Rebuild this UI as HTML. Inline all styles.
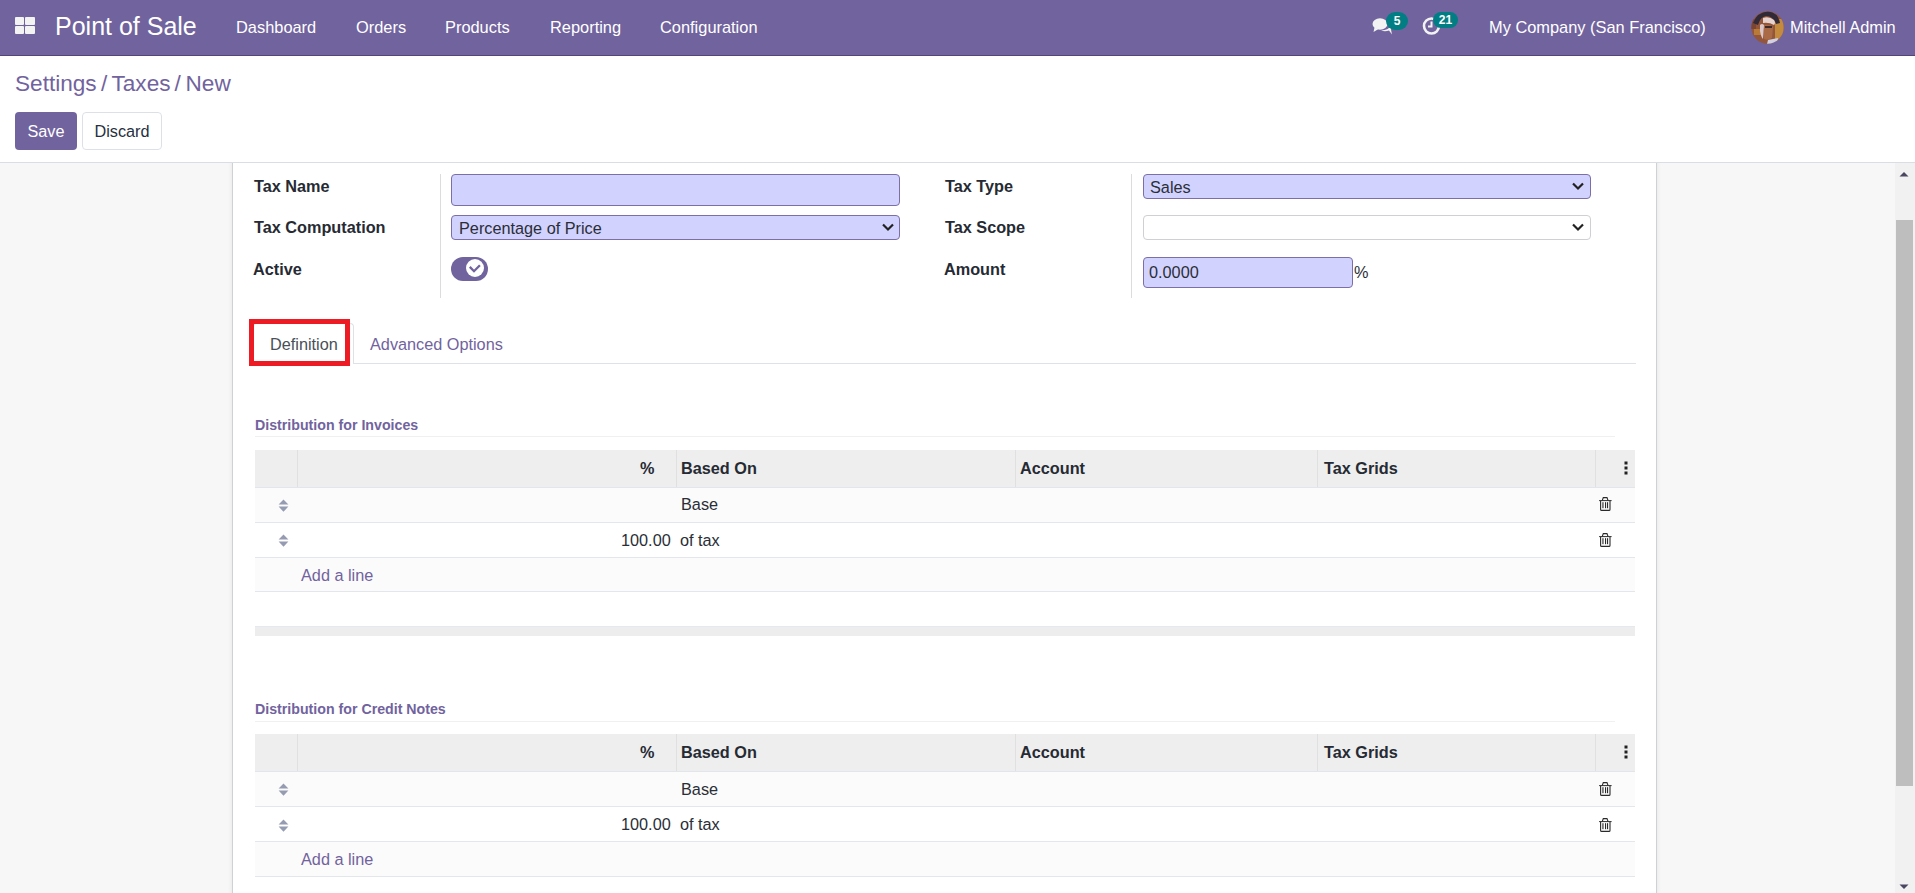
<!DOCTYPE html>
<html><head><meta charset="utf-8">
<style>
*{box-sizing:border-box;margin:0;padding:0}
html,body{width:1915px;height:893px;overflow:hidden;background:#fff;font-family:"Liberation Sans",sans-serif;font-size:16.25px;color:#2a2e36}
.a{position:absolute;white-space:nowrap}
.t{position:absolute;white-space:nowrap;line-height:20px}
#nav{position:absolute;left:0;top:0;width:1915px;height:56px;background:#71639e;border-bottom:1px solid #514579}
.nv{position:absolute;top:17px;line-height:20px;color:#fff;font-size:16.4px;white-space:nowrap}
#content{position:absolute;left:0;top:163px;width:1915px;height:730px;background:#f7f7f7;overflow:hidden}
.lbl{position:absolute;font-weight:700;color:#262a33;white-space:nowrap;line-height:20px}
.req{position:absolute;background:#d2d2ff;border:1px solid #7b6fa6;border-radius:4px}
.hd{position:absolute;background:#eeeeee;border-bottom:1px solid #e2e5ea}
.vl{position:absolute;width:1px;background:#dcdcdc}
.hl{position:absolute;height:1px;background:#e3e6ea}
.row1{position:absolute;background:#fbfbfb}
.th{position:absolute;font-weight:700;color:#262a33;white-space:nowrap;line-height:20px}
.dist{position:absolute;font-weight:700;font-size:14.2px;color:#71639e;white-space:nowrap;line-height:18px}
</style></head><body>
<!-- NAVBAR -->
<div id="nav">
  <div class="a" style="left:15px;top:17px;width:20px;height:17px">
    <div style="position:absolute;left:0;top:0;width:9px;height:8px;background:#f3f3f3;border-radius:1px"></div>
    <div style="position:absolute;left:10px;top:0;width:10px;height:8px;background:#f3f3f3;border-radius:1px"></div>
    <div style="position:absolute;left:0;top:9px;width:9px;height:8px;background:#f3f3f3;border-radius:1px"></div>
    <div style="position:absolute;left:10px;top:9px;width:10px;height:8px;background:#f3f3f3;border-radius:1px"></div>
  </div>
  <div class="nv" style="left:55px;top:11px;font-size:25px;line-height:30px">Point of Sale</div>
  <div class="nv" style="left:236px">Dashboard</div>
  <div class="nv" style="left:356px">Orders</div>
  <div class="nv" style="left:445px">Products</div>
  <div class="nv" style="left:550px">Reporting</div>
  <div class="nv" style="left:660px">Configuration</div>
  <!-- chat icon -->
  <svg class="a" style="left:1372px;top:17px" width="22" height="19" viewBox="0 0 22 19">
    <ellipse cx="8" cy="7" rx="7.5" ry="5.8" fill="#f2f2f2"/>
    <path d="M2.5 10.5 L1.5 15 L6.5 12 Z" fill="#f2f2f2"/>
    <path d="M9 13.5 Q13 15 17 13.5 L20 17.5 L19 12.5 Q21 10 19.5 8 Q17 13 9 13.5 Z" fill="#f2f2f2"/>
  </svg>
  <div class="a" style="left:1386px;top:12px;width:22px;height:18px;border-radius:9px;background:#017e84;color:#fff;font-weight:700;font-size:12px;line-height:18px;text-align:center">5</div>
  <!-- clock icon -->
  <svg class="a" style="left:1422px;top:16px" width="20" height="20" viewBox="0 0 20 20">
    <circle cx="9.5" cy="10" r="7.5" fill="none" stroke="#f2f2f2" stroke-width="2.6"/>
    <path d="M9.5 5.5 V10.5 H6" fill="none" stroke="#f2f2f2" stroke-width="2"/>
  </svg>
  <div class="a" style="left:1433px;top:12px;width:25px;height:16px;border-radius:8px;background:#017e84;color:#fff;font-weight:700;font-size:12px;line-height:16px;text-align:center">21</div>
  <div class="nv" style="left:1489px">My Company (San Francisco)</div>
  <!-- avatar -->
  <svg class="a" style="left:1751px;top:10.8px" width="33" height="33" viewBox="0 0 33 33">
    <defs><clipPath id="cc"><circle cx="16.5" cy="16.5" r="16.2"/></clipPath></defs>
    <g clip-path="url(#cc)">
      <rect width="33" height="33" fill="#94563a"/>
      <rect x="24" y="8" width="9" height="22" fill="#c48a3e"/>
      <rect x="3" y="18" width="8" height="6" fill="#b97a38"/>
      <rect x="0" y="8" width="5" height="10" fill="#7a4532"/>
      <path d="M2 12 Q6 1 17 0.5 Q27 1 29 12 L25 13 Q22 5 15 5 Q9 6 7 14 Z" fill="#2f2938"/>
      <path d="M0 22 Q3 32 14 34 L8 34 Q0 30 0 22 Z" fill="#3b2b30"/>
      <path d="M12 7 Q18 5 23 9 Q25 12 23 14 Q18 11 12 12 Z" fill="#e6d3cf"/>
      <path d="M9 14 Q11 12 13 14 L12 28 Q10 26 9 20 Z" fill="#dcc8c8"/>
      <path d="M13 14 Q18 13 22 16 L21 27 Q17 30 13 28 Z" fill="#a96a45"/>
      <rect x="14" y="15" width="7" height="2" fill="#3a2a2a"/>
      <path d="M17 29 L27 27 L26 33 L16 33 Z" fill="#cfd0e2"/>
    </g>
  </svg>
  <div class="nv" style="left:1790px">Mitchell Admin</div>
</div>

<!-- CONTROL PANEL -->
<div class="a" style="left:0;top:56px;width:1915px;height:107px;background:#fff;border-bottom:1px solid #dadde2"></div>
<div class="a" style="left:15px;top:70px;font-size:22.6px;line-height:28px;color:#71639e">Settings</div>
<div class="a" style="left:101px;top:70px;font-size:22.6px;line-height:28px;color:#71639e">/</div>
<div class="a" style="left:111.5px;top:70px;font-size:22.6px;line-height:28px;color:#71639e">Taxes</div>
<div class="a" style="left:174.5px;top:70px;font-size:22.6px;line-height:28px;color:#71639e">/</div>
<div class="a" style="left:185.5px;top:70px;font-size:22.6px;line-height:28px;color:#71639e">New</div>
<div class="a" style="left:15px;top:112px;width:62px;height:38px;background:#71639e;border-radius:4px;color:#fff;line-height:38px;text-align:center">Save</div>
<div class="a" style="left:82px;top:112px;width:80px;height:38px;background:#fff;border:1px solid #dde1e6;border-radius:4px;color:#263040;line-height:36px;text-align:center">Discard</div>

<!-- CONTENT -->
<div id="content"><div class="a" style="left:232px;top:-10px;width:1425px;height:760px;background:#fff;border-left:1px solid #cfd1d6;border-right:1px solid #cfd1d6;box-shadow:0 0 5px rgba(0,0,0,.08)"></div></div>

<!-- form left -->
<div class="lbl" style="left:254px;top:176px">Tax Name</div>
<div class="lbl" style="left:254px;top:217px">Tax Computation</div>
<div class="lbl" style="left:253px;top:259px">Active</div>
<div class="vl" style="left:440px;top:174px;height:124px"></div>
<div class="req" style="left:451px;top:174px;width:449px;height:32px"></div>
<div class="req" style="left:451px;top:215px;width:449px;height:25px"></div>
<div class="t" style="left:459px;top:218px">Percentage of Price</div>
<svg class="a" style="left:881px;top:222px" width="14" height="11" viewBox="0 0 14 11"><path d="M2 2.5 L7 7.5 L12 2.5" fill="none" stroke="#222" stroke-width="2.2"/></svg>
<!-- toggle -->
<div class="a" style="left:451px;top:257px;width:37px;height:24px;border-radius:12px;background:#71639e"></div>
<div class="a" style="left:466px;top:258.8px;width:18.4px;height:18.4px;border-radius:50%;background:#fff"></div>
<svg class="a" style="left:466px;top:258.8px" width="19" height="19" viewBox="0 0 19 19"><path d="M3.8 7.9 L8 12.2 L13.9 6.2" fill="none" stroke="#71639e" stroke-width="2.3"/></svg>

<!-- form right -->
<div class="lbl" style="left:945px;top:176px">Tax Type</div>
<div class="lbl" style="left:945px;top:217px">Tax Scope</div>
<div class="lbl" style="left:944px;top:259px">Amount</div>
<div class="vl" style="left:1131px;top:174px;height:124px"></div>
<div class="req" style="left:1143px;top:174px;width:448px;height:25px"></div>
<div class="t" style="left:1150px;top:177px">Sales</div>
<svg class="a" style="left:1571px;top:181px" width="14" height="11" viewBox="0 0 14 11"><path d="M2 2.5 L7 7.5 L12 2.5" fill="none" stroke="#222" stroke-width="2.2"/></svg>
<div class="a" style="left:1143px;top:215px;width:448px;height:25px;border:1px solid #cfcfd4;border-radius:4px;background:#fff"></div>
<svg class="a" style="left:1571px;top:222px" width="14" height="11" viewBox="0 0 14 11"><path d="M2 2.5 L7 7.5 L12 2.5" fill="none" stroke="#222" stroke-width="2.2"/></svg>
<div class="req" style="left:1143px;top:257px;width:210px;height:31px"></div>
<div class="t" style="left:1149px;top:262px">0.0000</div>
<div class="t" style="left:1354px;top:262px">%</div>

<!-- tabs -->
<div class="hl" style="left:255px;top:363px;width:1381px;background:#dee2e6"></div>
<div class="a" style="left:253px;top:323px;width:101px;height:41px;background:#fff;border:1px solid #dee2e6;border-bottom:none;border-radius:4px 4px 0 0"></div>
<div class="t" style="left:270px;top:334px;color:#495057">Definition</div>
<div class="t" style="left:370px;top:334px;color:#71639e">Advanced Options</div>
<div class="a" style="left:249px;top:319px;width:101px;height:47px;border:5px solid #ed1c24"></div>

<!-- distribution invoices -->
<div class="dist" style="left:255px;top:416px">Distribution for Invoices</div>
<div class="hl" style="left:255px;top:436px;width:1360px;background:#f0f0f0"></div>
<div class="hd" style="left:255px;top:450px;width:1380px;height:38px"></div>
<div class="vl" style="left:297px;top:450px;height:37px;background:#e0e0e0"></div>
<div class="vl" style="left:676px;top:450px;height:37px;background:#e0e0e0"></div>
<div class="vl" style="left:1015px;top:450px;height:37px;background:#e0e0e0"></div>
<div class="vl" style="left:1317px;top:450px;height:37px;background:#e0e0e0"></div>
<div class="vl" style="left:1595px;top:450px;height:37px;background:#e0e0e0"></div>
<div class="th" style="left:640px;top:458px">%</div>
<div class="th" style="left:681px;top:458px">Based On</div>
<div class="th" style="left:1020px;top:458px">Account</div>
<div class="th" style="left:1324px;top:458px">Tax Grids</div>
<svg class="a" style="left:1622px;top:460px" width="8" height="16" viewBox="0 0 8 16"><rect x="2.5" y="1.5" width="3" height="3" fill="#222"/><rect x="2.5" y="6.5" width="3" height="3" fill="#222"/><rect x="2.5" y="11.5" width="3" height="3" fill="#222"/></svg>
<div class="row1" style="left:255px;top:488px;width:1380px;height:34px"></div>
<div class="hl" style="left:255px;top:522px;width:1380px"></div>
<div class="hl" style="left:255px;top:557px;width:1380px"></div>
<div class="row1" style="left:255px;top:558px;width:1380px;height:33px"></div>
<div class="hl" style="left:255px;top:591px;width:1380px"></div>
<div class="t" style="left:681px;top:494px">Base</div>
<div class="t" style="left:621px;top:530px">100.00</div>
<div class="t" style="left:680px;top:530px">of tax</div>
<div class="t" style="left:301px;top:565px;color:#71639e">Add a line</div>
<div class="a" style="left:255px;top:626px;width:1380px;height:10px;background:#ededed;border-top:1px solid #e5e8ec"></div>

<!-- distribution credit notes -->
<div class="dist" style="left:255px;top:700px">Distribution for Credit Notes</div>
<div class="hl" style="left:255px;top:721px;width:1360px;background:#f0f0f0"></div>
<div class="hd" style="left:255px;top:734px;width:1380px;height:38px"></div>
<div class="vl" style="left:297px;top:734px;height:37px;background:#e0e0e0"></div>
<div class="vl" style="left:676px;top:734px;height:37px;background:#e0e0e0"></div>
<div class="vl" style="left:1015px;top:734px;height:37px;background:#e0e0e0"></div>
<div class="vl" style="left:1317px;top:734px;height:37px;background:#e0e0e0"></div>
<div class="vl" style="left:1595px;top:734px;height:37px;background:#e0e0e0"></div>
<div class="th" style="left:640px;top:742px">%</div>
<div class="th" style="left:681px;top:742px">Based On</div>
<div class="th" style="left:1020px;top:742px">Account</div>
<div class="th" style="left:1324px;top:742px">Tax Grids</div>
<svg class="a" style="left:1622px;top:744px" width="8" height="16" viewBox="0 0 8 16"><rect x="2.5" y="1.5" width="3" height="3" fill="#222"/><rect x="2.5" y="6.5" width="3" height="3" fill="#222"/><rect x="2.5" y="11.5" width="3" height="3" fill="#222"/></svg>
<div class="row1" style="left:255px;top:772px;width:1380px;height:34px"></div>
<div class="hl" style="left:255px;top:806px;width:1380px"></div>
<div class="hl" style="left:255px;top:841px;width:1380px"></div>
<div class="row1" style="left:255px;top:842px;width:1380px;height:34px"></div>
<div class="hl" style="left:255px;top:876px;width:1380px"></div>
<div class="t" style="left:681px;top:779px">Base</div>
<div class="t" style="left:621px;top:814px">100.00</div>
<div class="t" style="left:680px;top:814px">of tax</div>
<div class="t" style="left:301px;top:849px;color:#71639e">Add a line</div>

<svg class="a" style="left:277.5px;top:498.6px" width="12" height="14" viewBox="0 0 12 14"><path d="M0.6 5.5 L5.5 0.4 L10.4 5.5 Z M0.6 7.6 L10.4 7.6 L5.5 12.7 Z" fill="#959bb0"/></svg>
<svg class="a" style="left:1594px;top:492px" width="24" height="24" viewBox="0 0 24 24"><path d="M8.2 8.6 L9.3 5.6 H13 L14.1 8.6" fill="none" stroke="#2a2a2a" stroke-width="1.1"/><rect x="5.1" y="8.1" width="12.5" height="1" fill="#2a2a2a"/><path d="M6.6 9 V17.4 Q6.6 18.4 7.6 18.4 H15 Q16 18.4 16 17.4 V9" fill="none" stroke="#2a2a2a" stroke-width="1.1"/><rect x="8.4" y="10.2" width="1.1" height="6" fill="#2a2a2a"/><rect x="11" y="10.2" width="1.1" height="6" fill="#2a2a2a"/><rect x="13" y="10.2" width="1.1" height="6" fill="#2a2a2a"/></svg>
<svg class="a" style="left:277.5px;top:534.1px" width="12" height="14" viewBox="0 0 12 14"><path d="M0.6 5.5 L5.5 0.4 L10.4 5.5 Z M0.6 7.6 L10.4 7.6 L5.5 12.7 Z" fill="#959bb0"/></svg>
<svg class="a" style="left:1594px;top:528px" width="24" height="24" viewBox="0 0 24 24"><path d="M8.2 8.6 L9.3 5.6 H13 L14.1 8.6" fill="none" stroke="#2a2a2a" stroke-width="1.1"/><rect x="5.1" y="8.1" width="12.5" height="1" fill="#2a2a2a"/><path d="M6.6 9 V17.4 Q6.6 18.4 7.6 18.4 H15 Q16 18.4 16 17.4 V9" fill="none" stroke="#2a2a2a" stroke-width="1.1"/><rect x="8.4" y="10.2" width="1.1" height="6" fill="#2a2a2a"/><rect x="11" y="10.2" width="1.1" height="6" fill="#2a2a2a"/><rect x="13" y="10.2" width="1.1" height="6" fill="#2a2a2a"/></svg>
<svg class="a" style="left:277.5px;top:783.1px" width="12" height="14" viewBox="0 0 12 14"><path d="M0.6 5.5 L5.5 0.4 L10.4 5.5 Z M0.6 7.6 L10.4 7.6 L5.5 12.7 Z" fill="#959bb0"/></svg>
<svg class="a" style="left:1594px;top:776.5px" width="24" height="24" viewBox="0 0 24 24"><path d="M8.2 8.6 L9.3 5.6 H13 L14.1 8.6" fill="none" stroke="#2a2a2a" stroke-width="1.1"/><rect x="5.1" y="8.1" width="12.5" height="1" fill="#2a2a2a"/><path d="M6.6 9 V17.4 Q6.6 18.4 7.6 18.4 H15 Q16 18.4 16 17.4 V9" fill="none" stroke="#2a2a2a" stroke-width="1.1"/><rect x="8.4" y="10.2" width="1.1" height="6" fill="#2a2a2a"/><rect x="11" y="10.2" width="1.1" height="6" fill="#2a2a2a"/><rect x="13" y="10.2" width="1.1" height="6" fill="#2a2a2a"/></svg>
<svg class="a" style="left:277.5px;top:818.6px" width="12" height="14" viewBox="0 0 12 14"><path d="M0.6 5.5 L5.5 0.4 L10.4 5.5 Z M0.6 7.6 L10.4 7.6 L5.5 12.7 Z" fill="#959bb0"/></svg>
<svg class="a" style="left:1594px;top:812.5px" width="24" height="24" viewBox="0 0 24 24"><path d="M8.2 8.6 L9.3 5.6 H13 L14.1 8.6" fill="none" stroke="#2a2a2a" stroke-width="1.1"/><rect x="5.1" y="8.1" width="12.5" height="1" fill="#2a2a2a"/><path d="M6.6 9 V17.4 Q6.6 18.4 7.6 18.4 H15 Q16 18.4 16 17.4 V9" fill="none" stroke="#2a2a2a" stroke-width="1.1"/><rect x="8.4" y="10.2" width="1.1" height="6" fill="#2a2a2a"/><rect x="11" y="10.2" width="1.1" height="6" fill="#2a2a2a"/><rect x="13" y="10.2" width="1.1" height="6" fill="#2a2a2a"/></svg>
<!-- scrollbar -->
<div class="a" style="left:1895px;top:163px;width:20px;height:730px;background:#f1f1f1"></div>
<div class="a" style="left:1896px;top:220px;width:17px;height:566px;background:#bebebe"></div>
<svg class="a" style="left:1898px;top:170px" width="12" height="8" viewBox="0 0 12 8"><path d="M1.5 6.5 L6 2 L10.5 6.5 Z" fill="#4a4560"/></svg>
<svg class="a" style="left:1898px;top:883px" width="12" height="8" viewBox="0 0 12 8"><path d="M1.5 1.5 L6 6 L10.5 1.5 Z" fill="#4a4560"/></svg>
</body></html>
